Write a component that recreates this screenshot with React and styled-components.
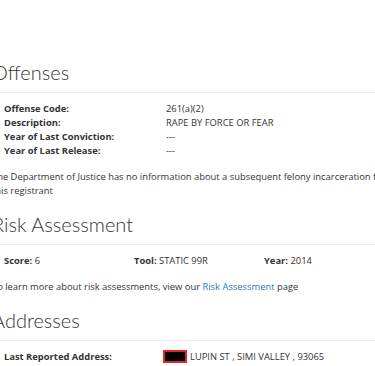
import React from 'react';
import styled, { createGlobalStyle } from 'styled-components';

const GlobalStyle = createGlobalStyle`
  html, body {
    margin: 0;
    padding: 0;
    background: #ffffff;
    overflow: hidden;
  }
  body {
    font-family: "Open Sans", "Liberation Sans", sans-serif;
    font-size: 9.4px;
    line-height: 14px;
    color: #333333;
  }
`;

const Page = styled.div`
  width: 520px;
  margin-left: -8px;
  padding-top: 60px;
`;

const Section = styled.section`
  & + & {
    margin-top: 14px;
  }
`;

const Heading = styled.h2`
  margin: 0;
  font-family: Lato, "Open Sans", sans-serif;
  font-weight: 300;
  font-size: 20px;
  line-height: 24px;
  color: #333333;
`;

const Rule = styled.hr`
  width: 383px;
  margin: 8px 0 9px;
  border: 0;
  border-top: 1px solid #eeeeee;
`;

const Details = styled.dl`
  margin: 0;
  padding-left: 12px;
  display: grid;
  grid-template-columns: ${(p) => p.$labelWidth || 162}px 1fr;
`;

const Label = styled.dt`
  font-weight: 700;
`;

const Value = styled.dd`
  margin: 0;
`;

const Columns = styled.div`
  padding-left: 12px;
  display: grid;
  grid-template-columns: 130px 130px 1fr;
`;

const Note = styled.p`
  margin: 12px 0 0;
  width: 398px;
`;

const Link = styled.a`
  color: #2a7ab8;
  text-decoration: none;
`;

const Redacted = styled.span`
  display: inline-block;
  width: 20px;
  height: 9px;
  background: #000000;
  border: 2px solid #e0262c;
  vertical-align: -3px;
  margin-right: 3px;
`;

export default function App() {
  return (
    <>
      <GlobalStyle />
      <Page>
        <Section>
          <Heading>Offenses</Heading>
          <Rule />
          <Details>
            <Label>Offense Code:</Label>
            <Value>261(a)(2)</Value>
            <Label>Description:</Label>
            <Value>RAPE BY FORCE OR FEAR</Value>
            <Label>Year of Last Conviction:</Label>
            <Value>---</Value>
            <Label>Year of Last Release:</Label>
            <Value>---</Value>
          </Details>
          <Note>
            The Department of Justice has no information about a subsequent felony incarceration for
            this registrant
          </Note>
        </Section>

        <Section>
          <Heading>Risk Assessment</Heading>
          <Rule />
          <Columns>
            <div><b>Score:</b> 6</div>
            <div><b>Tool:</b> STATIC 99R</div>
            <div><b>Year:</b> 2014</div>
          </Columns>
          <Note>
            To learn more about risk assessments, view our <Link href="#">Risk Assessment</Link> page
          </Note>
        </Section>

        <Section>
          <Heading>Addresses</Heading>
          <Rule />
          <Details $labelWidth={159}>
            <Label>Last Reported Address:</Label>
            <Value>
              <Redacted />LUPIN ST , SIMI VALLEY , 93065
            </Value>
          </Details>
        </Section>
      </Page>
    </>
  );
}
